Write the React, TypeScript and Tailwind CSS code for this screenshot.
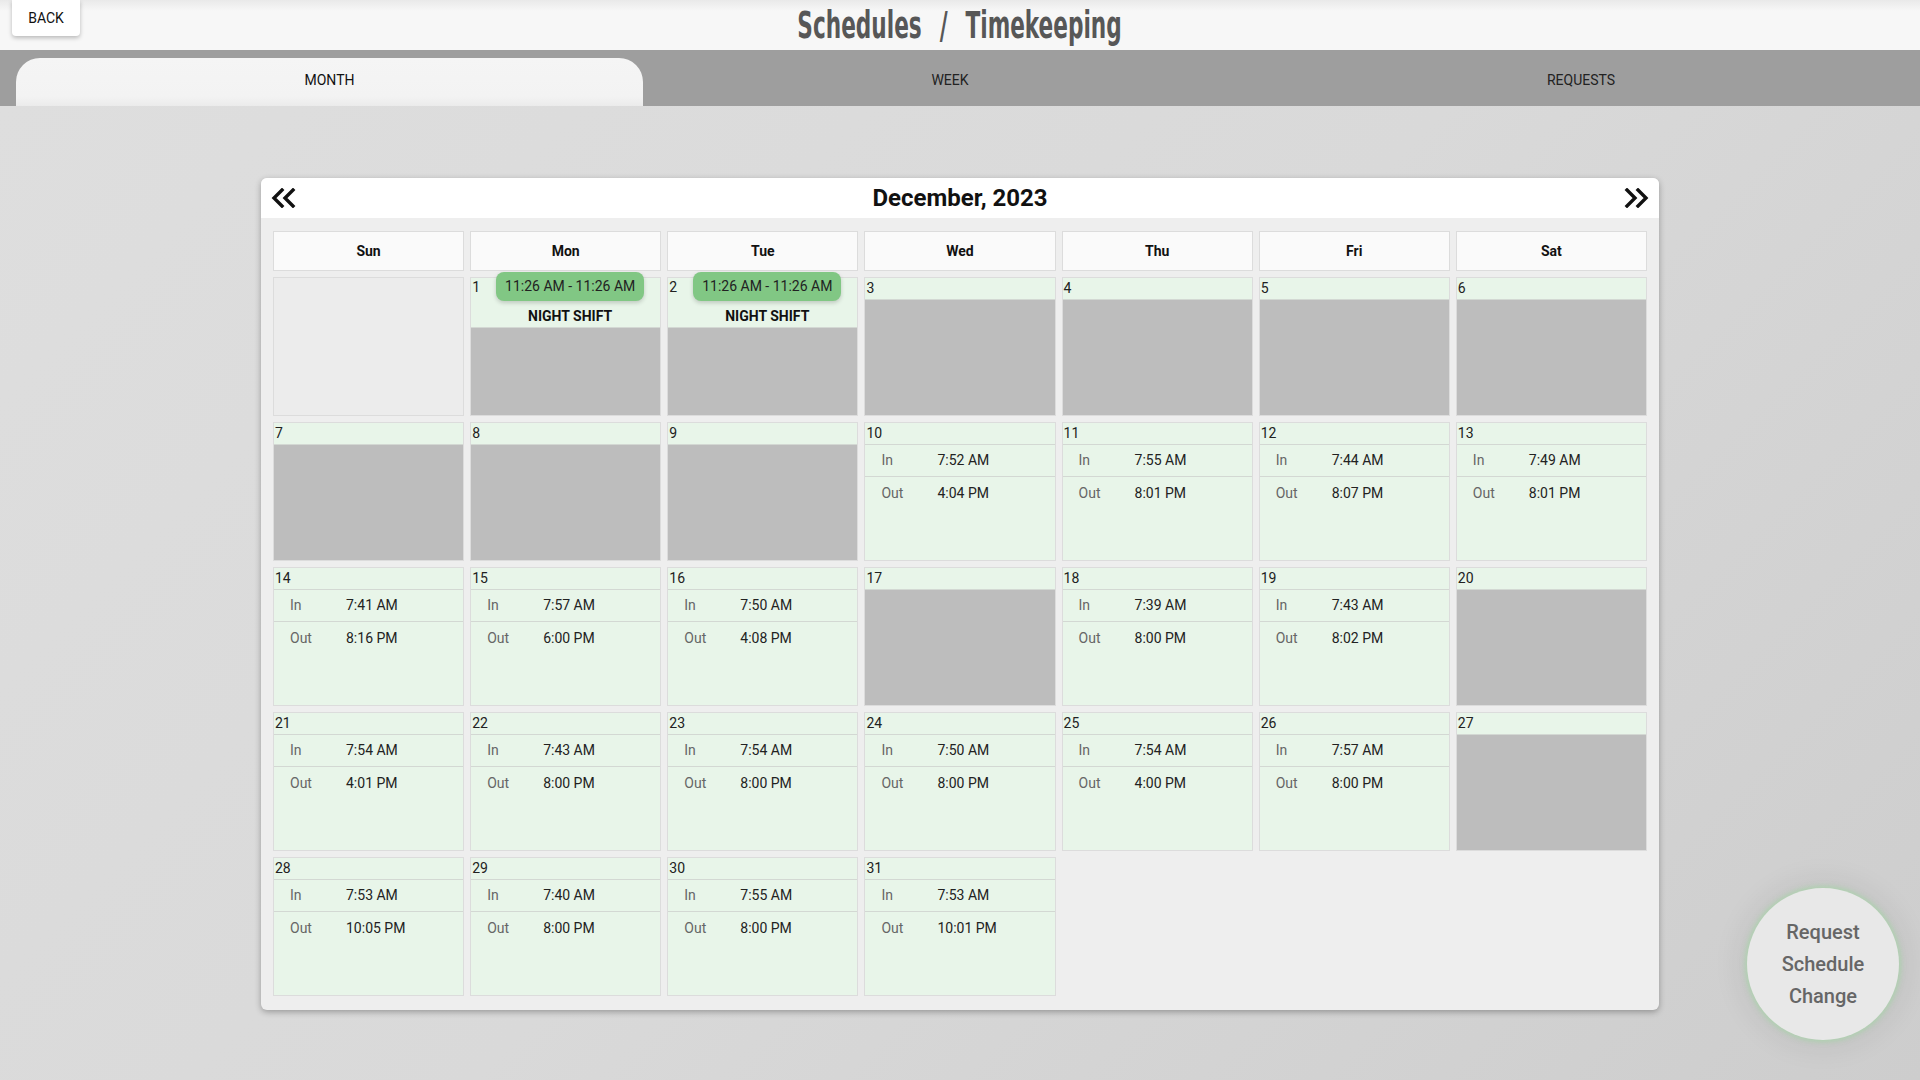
import React from 'react';

type Day =
  | { kind: 'blank' }
  | { kind: 'none' }
  | { kind: 'off'; n: number }
  | { kind: 'shift'; n: number; time: string; label: string }
  | { kind: 'work'; n: number; tin: string; tout: string };

const off = (n: number): Day => ({ kind: 'off', n });
const work = (n: number, tin: string, tout: string): Day => ({ kind: 'work', n, tin, tout });

const DAYS: Day[] = [
  { kind: 'blank' },
  { kind: 'shift', n: 1, time: '11:26 AM - 11:26 AM', label: 'NIGHT SHIFT' },
  { kind: 'shift', n: 2, time: '11:26 AM - 11:26 AM', label: 'NIGHT SHIFT' },
  off(3), off(4), off(5), off(6),
  off(7), off(8), off(9),
  work(10, '7:52 AM', '4:04 PM'),
  work(11, '7:55 AM', '8:01 PM'),
  work(12, '7:44 AM', '8:07 PM'),
  work(13, '7:49 AM', '8:01 PM'),
  work(14, '7:41 AM', '8:16 PM'),
  work(15, '7:57 AM', '6:00 PM'),
  work(16, '7:50 AM', '4:08 PM'),
  off(17),
  work(18, '7:39 AM', '8:00 PM'),
  work(19, '7:43 AM', '8:02 PM'),
  off(20),
  work(21, '7:54 AM', '4:01 PM'),
  work(22, '7:43 AM', '8:00 PM'),
  work(23, '7:54 AM', '8:00 PM'),
  work(24, '7:50 AM', '8:00 PM'),
  work(25, '7:54 AM', '4:00 PM'),
  work(26, '7:57 AM', '8:00 PM'),
  off(27),
  work(28, '7:53 AM', '10:05 PM'),
  work(29, '7:40 AM', '8:00 PM'),
  work(30, '7:55 AM', '8:00 PM'),
  work(31, '7:53 AM', '10:01 PM'),
  { kind: 'none' }, { kind: 'none' }, { kind: 'none' },
];

const WEEKDAYS = ['Sun', 'Mon', 'Tue', 'Wed', 'Thu', 'Fri', 'Sat'];

const DoubleChevron = ({ dir }: { dir: 'left' | 'right' }) => (
  <svg width="26" height="20" viewBox="0 0 26 20" fill="none" stroke="#111" strokeWidth={3.4} strokeLinecap="square" strokeLinejoin="miter">
    {dir === 'left' ? (
      <>
        <path d="M12 2 L4 10 L12 18" />
        <path d="M23 2 L15 10 L23 18" />
      </>
    ) : (
      <>
        <path d="M3 2 L11 10 L3 18" />
        <path d="M14 2 L22 10 L14 18" />
      </>
    )}
  </svg>
);

const DayCell = ({ day }: { day: Day }) => {
  if (day.kind === 'none') return <div />;
  if (day.kind === 'blank') {
    return <div className="h-[139px] border border-[#dcdcdc] bg-[#ececec]" />;
  }
  if (day.kind === 'off') {
    return (
      <div className="h-[139px] border border-[#dcdcdc] bg-[#e8f5e9] flex flex-col">
        <div className="h-[22px] border-b border-[#d3d8d3] pl-[1px] text-[14px] leading-[21px] text-[#212121]">{day.n}</div>
        <div className="flex-1 bg-[#bdbdbd]" />
      </div>
    );
  }
  if (day.kind === 'shift') {
    return (
      <div className="h-[139px] border border-[#dcdcdc] bg-[#e8f5e9] flex flex-col">
        <div className="h-[50px] border-b border-[#d3d8d3] flex">
          <span className="pl-[1px] text-[14px] leading-[18px] text-[#212121]">{day.n}</span>
          <div className="flex-1 flex flex-col items-center">
            <div className="mt-[-6px] h-[29px] px-[9px] rounded-[8px] bg-[#81c784] shadow-[0_2px_4px_rgba(0,0,0,0.18)] flex items-center text-[14px] text-[#222]">
              {day.time}
            </div>
            <div className="mt-[7px] text-[14px] leading-[16px] font-bold text-[#111]">{day.label}</div>
          </div>
        </div>
        <div className="flex-1 bg-[#bdbdbd]" />
      </div>
    );
  }
  return (
    <div className="h-[139px] border border-[#dcdcdc] bg-[#e8f5e9] flex flex-col text-[14px]">
      <div className="h-[22px] border-b border-[#d3d8d3] pl-[1px] leading-[21px] text-[#212121]">{day.n}</div>
      <div className="h-[32px] border-b border-[#d3d8d3] flex items-center pl-4">
        <span className="w-[56px] text-[#666]">In</span>
        <span className="text-[#222]">{day.tin}</span>
      </div>
      <div className="h-[32px] flex items-center pl-4">
        <span className="w-[56px] text-[#666]">Out</span>
        <span className="text-[#222]">{day.tout}</span>
      </div>
    </div>
  );
};

export default function App() {
  return (
    <div className="relative h-[1080px] w-[1920px] overflow-hidden flex flex-col font-['Roboto',sans-serif]">
      {/* Top header */}
      <div className="h-[50px] grid grid-cols-[1fr_auto_1fr] items-start bg-[linear-gradient(to_bottom,#e9e9e9,#f7f7f7_22%,#f7f7f7)]">
        <div className="pl-3">
          <button className="h-[36px] w-[68px] bg-white rounded-b-[4px] shadow-[0_2px_4px_rgba(0,0,0,0.25)] text-[14px] text-[#111]">
            BACK
          </button>
        </div>
        <div className="h-[50px] flex items-center">
          <h1 className="font-['DejaVu_Sans_Condensed','DejaVu_Sans',sans-serif] font-bold text-[37px] leading-none text-[#575757] scale-x-[0.65] [word-spacing:16px] whitespace-nowrap">
            Schedules / Timekeeping
          </h1>
        </div>
        <div />
      </div>

      {/* Tabs */}
      <div className="h-[56px] bg-[#9e9e9e] flex items-end pl-4 text-[14px]">
        <div className="w-[627px] h-[48px] rounded-t-[24px] bg-[linear-gradient(to_bottom,#f5f5f5,#f3f3f3_80%,#ebebeb)] flex items-center justify-center pb-[4px] text-[#111]">
          MONTH
        </div>
        <div className="w-[614px] h-full flex items-center justify-center pt-[4px] text-[#222]">WEEK</div>
        <div className="w-[648px] h-full flex items-center justify-center pt-[4px] text-[#222]">REQUESTS</div>
      </div>

      {/* Main */}
      <div className="flex-1 bg-[linear-gradient(135deg,#dedede,#d9d9d9_50%,#cdcdcd)] pt-[72px]">
        <div className="mx-auto w-[1398px] rounded-[6px] bg-[#eeeeee] shadow-[0_2px_6px_rgba(0,0,0,0.3)] overflow-hidden">
          <div className="h-[40px] bg-white flex items-center justify-between px-[9px]">
            <DoubleChevron dir="left" />
            <div className="text-[24px] font-bold text-[#111]">December, 2023</div>
            <DoubleChevron dir="right" />
          </div>
          <div className="px-3 pt-[13px] pb-[14px]">
            <div className="grid grid-cols-7 gap-[6px]">
              {WEEKDAYS.map((d) => (
                <div key={d} className="h-[40px] border border-[#dcdcdc] bg-[#fafafa] flex items-center justify-center text-[14px] font-bold text-[#111]">
                  {d}
                </div>
              ))}
              {DAYS.map((d, i) => (
                <DayCell key={i} day={d} />
              ))}
            </div>
          </div>
        </div>
      </div>

      {/* Floating request button */}
      <button className="absolute right-[21px] bottom-[40px] w-[152px] h-[152px] rounded-full bg-[#e8e8e8] shadow-[0_0_5px_2px_rgba(165,214,167,0.75),0_0_28px_10px_rgba(0,0,0,0.06)] flex items-center justify-center text-[20px] leading-[32px] font-medium text-[#666]">
        Request
        <br />
        Schedule
        <br />
        Change
      </button>
    </div>
  );
}
